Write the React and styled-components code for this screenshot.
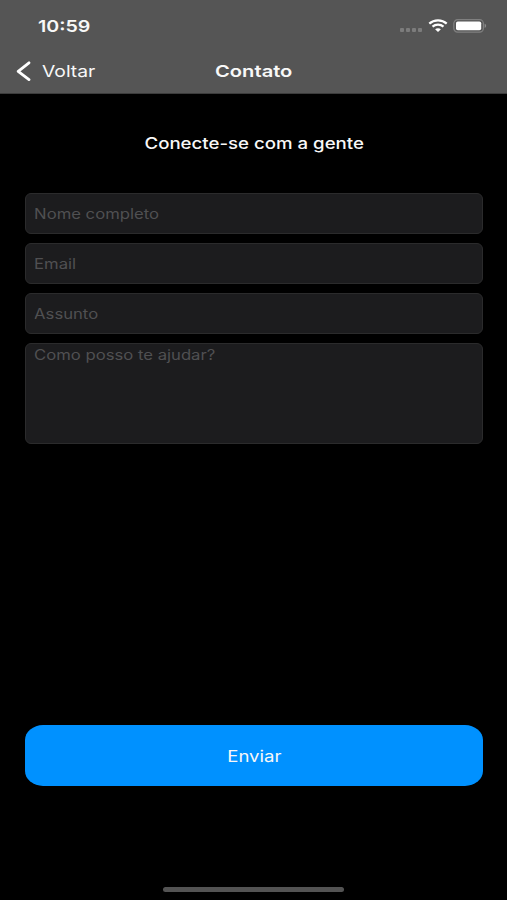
import React, { useState } from "react";
import styled, { createGlobalStyle } from "styled-components";

const fields = [
  { name: "name", placeholder: "Nome completo" },
  { name: "email", placeholder: "Email" },
  { name: "subject", placeholder: "Assunto" },
];

const App = () => {
  const [values, setValues] = useState({ name: "", email: "", subject: "", message: "" });

  const handleChange = (event) => {
    setValues({ ...values, [event.target.name]: event.target.value });
  };

  return (
    <>
      <GlobalStyle />
      <Screen>
        <Header>
          <StatusBar>
            <Time>10:59</Time>
            <StatusIcons>
              <Signal>
                <i />
                <i />
                <i />
                <i />
              </Signal>
              <WifiIcon />
              <BatteryIcon />
            </StatusIcons>
          </StatusBar>
          <NavBar>
            <BackButton type="button">
              <svg width="15" height="20" viewBox="0 0 15 20" fill="none">
                <path d="M13 1.8L2.2 10.3L13 18.6" stroke="#fff" strokeWidth="2.8" strokeLinecap="round" strokeLinejoin="round" />
              </svg>
              <BackText>Voltar</BackText>
            </BackButton>
            <NavTitle>Contato</NavTitle>
          </NavBar>
        </Header>
        <Content>
          <Heading>Conecte-se com a gente</Heading>
          <Form onSubmit={(event) => event.preventDefault()}>
            {fields.map((field) => (
              <Field key={field.name}>
                <Input
                  name={field.name}
                  placeholder={field.placeholder}
                  value={values[field.name]}
                  onChange={handleChange}
                />
              </Field>
            ))}
            <Field $multiline>
              <TextArea
                name="message"
                placeholder="Como posso te ajudar?"
                value={values.message}
                onChange={handleChange}
              />
            </Field>
            <SubmitButton type="submit">
              <SubmitText>Enviar</SubmitText>
            </SubmitButton>
          </Form>
        </Content>
        <HomeIndicator />
      </Screen>
    </>
  );
};

const WifiIcon = () => (
  <svg width="20" height="14" viewBox="0 0 20 14" fill="none">
    <path d="M1.3 4.6C6 .3 14 .3 18.7 4.6" stroke="#fff" strokeWidth="2.2" />
    <path d="M4.5 7.7C7.6 5 12.4 5 15.5 7.7" stroke="#fff" strokeWidth="2.2" />
    <path d="M7.1 10.3C8.7 8.9 11.3 8.9 12.9 10.3L10 13Z" fill="#fff" />
  </svg>
);

const BatteryIcon = () => (
  <svg width="34" height="14" viewBox="0 0 34 14" fill="none">
    <rect x="0.8" y="0.7" width="29.6" height="12.4" rx="3.8" stroke="#808080" strokeWidth="1.2" />
    <rect x="3" y="2.5" width="25.2" height="8.8" rx="1.8" fill="#fff" />
    <path d="M31.6 4.8C33.6 5.4 33.6 8.4 31.6 9Z" fill="#8c8c8c" />
  </svg>
);

export default App;

const GlobalStyle = createGlobalStyle`
  * {
    box-sizing: border-box;
  }

  body {
    margin: 0;
    background: #000;
    font-family: Inter, "Liberation Sans", sans-serif;
  }
`;

const Screen = styled.div`
  display: flex;
  flex-direction: column;
  height: 900px;
  background: #000;
  color: #f8f8f8;
  overflow: hidden;
`;

const Header = styled.header`
  height: 94px;
  flex-shrink: 0;
  background: #555;
  border-bottom: 1px solid #3c3c3c;
`;

const StatusBar = styled.div`
  display: flex;
  align-items: center;
  justify-content: space-between;
  height: 52px;
  padding: 0 20px 0 38px;
`;

// Wide lettering, shared by every label on the screen
const WideText = styled.span`
  display: inline-block;
  line-height: 20px;
  white-space: nowrap;
  transform: scaleX(${({ $stretch }) => $stretch || 1.19});
  transform-origin: ${({ $center }) => ($center ? "center" : "left")};
`;

const Time = styled(WideText)`
  font-size: 16.5px;
  font-weight: 600;
`;

const StatusIcons = styled.div`
  display: flex;
  align-items: center;
  gap: 5px;
`;

const Signal = styled.div`
  display: flex;
  gap: 2px;
  padding: 8px 1px 0 0;

  i {
    width: 4px;
    height: 4px;
    border-radius: 1px;
    background: #7c7c7c;
  }
`;

const NavBar = styled.nav`
  display: grid;
  grid-template-columns: 1fr auto 1fr;
  align-items: center;
  height: 38px;
  padding: 0 16px;
`;

const BackButton = styled.button`
  display: flex;
  align-items: center;
  gap: 11px;
  padding: 0;
  border: 0;
  background: none;
  color: inherit;
  font-family: inherit;
  cursor: pointer;
`;

const BackText = styled(WideText).attrs({ $stretch: 1.17 })`
  font-size: 16.5px;
`;

const NavTitle = styled(WideText).attrs({ $center: true, $stretch: 1.22 })`
  font-size: 16.5px;
  font-weight: 600;
`;

const Content = styled.main`
  display: flex;
  flex: 1;
  flex-direction: column;
  padding: 39px 24px 0 25px;
`;

const Heading = styled(WideText).attrs({ as: "h1", $center: true, $stretch: 1.165 })`
  align-self: center;
  margin: 0;
  font-size: 16px;
  font-weight: 500;
`;

const Form = styled.form`
  display: flex;
  flex-direction: column;
  gap: 9px;
  margin-top: 40px;
`;

const Field = styled.label`
  display: block;
  height: ${({ $multiline }) => ($multiline ? "101px" : "41px")};
  border: 1px solid #2b2b2c;
  border-radius: 6px;
  background: #1c1c1e;
  overflow: hidden;
`;

const Input = styled.input`
  display: block;
  width: 84%;
  height: 100%;
  padding: 0 6.8px;
  border: 0;
  outline: 0;
  background: none;
  color: #fff;
  font-family: inherit;
  font-size: 14px;
  line-height: 20px;
  transform: scaleX(1.19);
  transform-origin: left;

  &::placeholder {
    color: #505052;
    opacity: 1;
  }
`;

const TextArea = styled(Input).attrs({ as: "textarea" })`
  padding-top: 1px;
  resize: none;
`;

const SubmitButton = styled.button`
  display: flex;
  align-items: center;
  justify-content: center;
  height: 61px;
  margin-top: 272px;
  border: 0;
  border-radius: 18px / 15px;
  background: #0091ff;
  color: #f8f8f8;
  font-family: inherit;
  cursor: pointer;
`;

const SubmitText = styled(WideText).attrs({ $center: true, $stretch: 1.16 })`
  font-size: 16px;
`;

const HomeIndicator = styled.div`
  align-self: center;
  width: 181px;
  height: 5px;
  margin-bottom: 8px;
  border-radius: 3px;
  background: #535353;
`;
